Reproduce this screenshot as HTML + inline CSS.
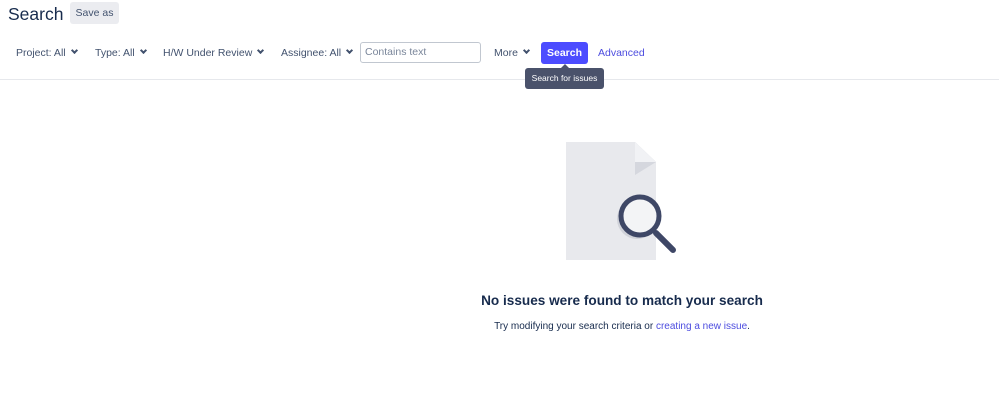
<!DOCTYPE html>
<html><head><meta charset="utf-8"><style>
*{box-sizing:border-box;margin:0;padding:0}
body{width:999px;height:419px;background:#fff;font-family:"Liberation Sans",sans-serif;color:#172b4d;position:relative;overflow:hidden}
.a{position:absolute;white-space:nowrap}
h1{position:absolute;left:8px;top:3px;font-size:17.5px;line-height:22px;font-weight:normal;color:#172b4d}
.save{left:70px;top:2px;width:49px;height:22px;background:#ebecf0;border-radius:3px;font-size:10.5px;color:#42526e;text-align:center;line-height:22px}
.f{top:46px;font-size:10.5px;line-height:14px;color:#42526e}
.f b{display:inline-block;width:5px;height:5px;border-right:2px solid #42526e;border-bottom:2px solid #42526e;transform:rotate(45deg);margin-left:6px;position:relative;top:-3px}
.inp{left:360px;top:42px;width:121px;height:21px;border:1px solid #c1c7d0;border-radius:3px;font-size:10.5px;line-height:13px;color:#7a869a;padding:3px 4px}
.btn{left:541px;top:42px;width:47px;height:22px;background:#4c4cff;border-radius:3px;color:#fff;font-size:10.5px;font-weight:bold;text-align:center;line-height:22px}
.tip{left:525px;top:68px;width:79px;height:21px;background:#4a526b;border-radius:3px;color:#fff;font-size:8.5px;text-align:center;line-height:21px;z-index:2}
.tip:before{content:"";position:absolute;left:36px;top:-4px;border:4px solid transparent;border-top:0;border-bottom-color:#4a526b}
.hr{left:0;top:79px;width:999px;height:1px;background:#e6e8ec}
</style></head><body>
<h1>Search</h1>
<div class="a save">Save as</div>
<div class="a f" style="left:16px">Project: All<b></b></div>
<div class="a f" style="left:95px">Type: All<b></b></div>
<div class="a f" style="left:163px">H/W Under Review<b></b></div>
<div class="a f" style="left:281px">Assignee: All<b></b></div>
<div class="a inp">Contains text</div>
<div class="a f" style="left:494px">More<b></b></div>
<div class="a btn">Search</div>
<div class="a f" style="left:598px;color:#4c4cdf">Advanced</div>
<div class="a hr"></div>
<div class="a tip">Search for issues</div>
<svg class="a" style="left:560px;top:138px" width="130" height="130" viewBox="560 138 130 130">
<path d="M566 142H635L656 162V260H566Z" fill="#e8e9ed"/>
<path d="M635 142L656 162L635 175Z" fill="#d5d7de"/>
<path d="M635 142V162H656Z" fill="#f1f2f5"/>
<circle cx="637" cy="219" r="20" fill="#d0d2d9"/>
<line x1="656" y1="233" x2="673" y2="250" stroke="#3e4766" stroke-width="6" stroke-linecap="round"/>
<circle cx="640" cy="216" r="19" fill="#f3f4f6" stroke="#3e4766" stroke-width="5"/>
</svg>
<div class="a" style="left:0;width:1244px;top:293px;text-align:center;font-size:13.6px;font-weight:bold;color:#172b4d">No issues were found to match your search</div>
<div class="a" style="left:0;width:1244px;top:321px;text-align:center;font-size:10px;color:#172b4d">Try modifying your search criteria or <span style="color:#4c4cdf">creating a new issue</span>.</div>
</body></html>
